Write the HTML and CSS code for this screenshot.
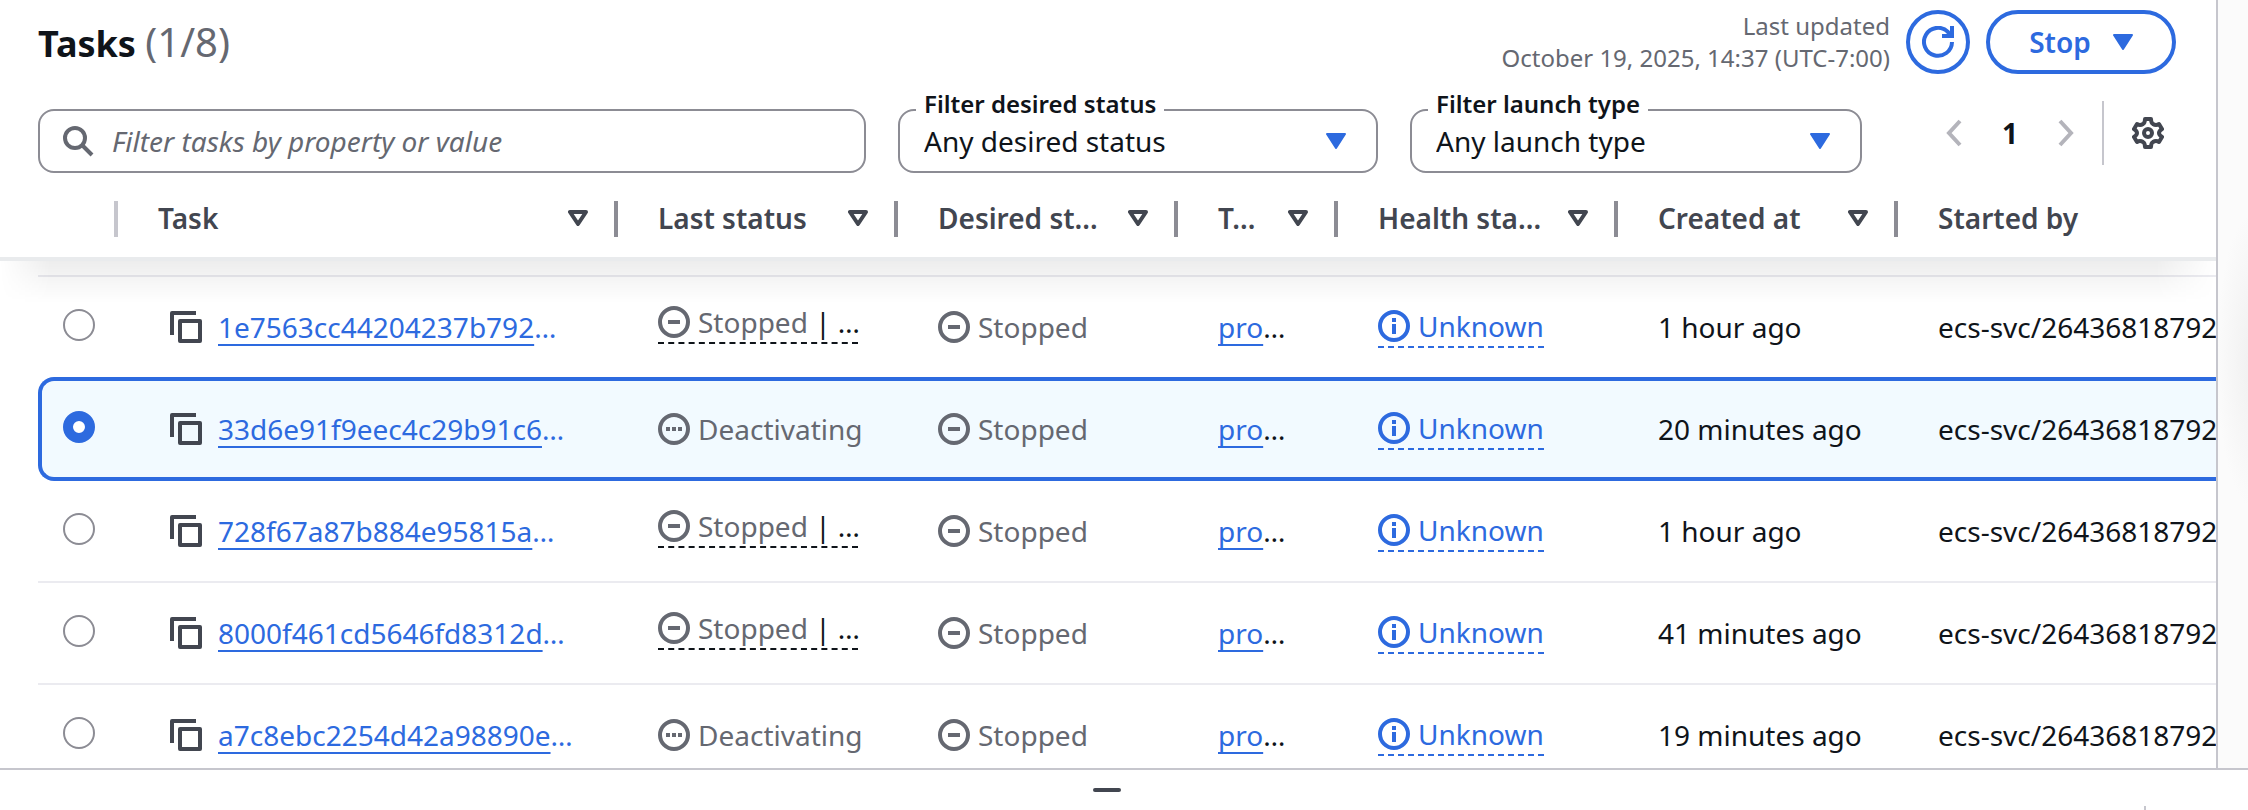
FILE: index.html
```html
<!DOCTYPE html>
<html lang="en">
<head>
<meta charset="utf-8">
<title>Tasks</title>
<link rel="stylesheet" href="styles.css">
</head>
<body>
<svg class="defs" aria-hidden="true">
  <symbol id="copy" viewBox="0 0 32 32"><path d="M2 24V2H26M10 10H30V30H10Z" fill="none" stroke="currentColor" stroke-width="4" stroke-linejoin="round"/></symbol>
  <symbol id="stopped" viewBox="0 0 32 32"><circle cx="16" cy="16" r="14" fill="none" stroke="currentColor" stroke-width="4"/><path d="M10 16H22" stroke="currentColor" stroke-width="4"/></symbol>
  <symbol id="pending" viewBox="0 0 32 32"><circle cx="16" cy="16" r="14" fill="none" stroke="currentColor" stroke-width="4"/><path d="M8 16H12M14 16H18M20 16H24" stroke="currentColor" stroke-width="4"/></symbol>
  <symbol id="info" viewBox="0 0 32 32"><circle cx="16" cy="16" r="14" fill="none" stroke="currentColor" stroke-width="4"/><path d="M16 8V12M16 14V24" stroke="currentColor" stroke-width="4"/></symbol>
  <symbol id="sort" viewBox="0 0 20 16"><path d="M2 2H18L10 14Z" fill="none" stroke="currentColor" stroke-width="4" stroke-linejoin="round"/></symbol>
  <symbol id="caret" viewBox="0 0 20 16"><path d="M1 1H19L10 15Z" fill="currentColor" stroke="currentColor" stroke-width="2" stroke-linejoin="round"/></symbol>
</svg>
<div class="layout">
  <main class="content">
    <header class="bar">
      <h2 class="title">Tasks <span class="count">(1/8)</span></h2>
      <div class="actions">
        <p class="updated">Last updated<br>October 19, 2025, 14:37 (UTC-7:00)</p>
        <button class="btn round" aria-label="Refresh"><svg width="32" height="32" viewBox="0 0 32 32" fill="none" stroke="currentColor" stroke-width="4"><path d="M30 16A14 14 0 1 1 26 6L29 10"/><path d="M30 0V10H20"/></svg></button>
        <button class="btn stop">Stop<svg width="20" height="16"><use href="#caret"/></svg></button>
      </div>
    </header>
    <div class="filters">
      <label class="search"><svg width="32" height="32" viewBox="0 0 32 32" fill="none" stroke="currentColor" stroke-width="4"><circle cx="13" cy="13" r="10"/><path d="M20 20L30 30"/></svg><input type="text" aria-label="Filter tasks" placeholder="Filter tasks by property or value"></label>
      <div class="field wide"><label for="desired">Filter desired status</label><select id="desired"><option>Any desired status</option></select><svg width="20" height="16"><use href="#caret"/></svg></div>
      <div class="field"><label for="launch">Filter launch type</label><select id="launch"><option>Any launch type</option></select><svg width="20" height="16"><use href="#caret"/></svg></div>
      <nav class="pager">
        <button class="icon off" aria-label="Previous page"><svg width="16" height="28" viewBox="0 0 16 28" fill="none" stroke="currentColor" stroke-width="4"><path d="M14 2L3 14L14 26"/></svg></button>
        <button class="page">1</button>
        <button class="icon off" aria-label="Next page"><svg width="16" height="28" viewBox="0 0 16 28" fill="none" stroke="currentColor" stroke-width="4"><path d="M2 2L13 14L2 26"/></svg></button>
        <button class="icon prefs" aria-label="Preferences"><svg width="32" height="32" viewBox="0 0 32 32" fill="none" stroke="currentColor" stroke-width="4" stroke-linejoin="round"><path d="M13 2H19Q19 6 21 7Q24 9 27 7L30 12Q27 14 27 16Q27 18 30 20L27 25Q24 23 21 25Q19 26 19 30H13Q13 26 11 25Q8 23 5 25L2 20Q5 18 5 16Q5 14 2 12L5 7Q8 9 11 7Q13 6 13 2Z"/><circle cx="16" cy="16" r="4"/></svg></button>
      </nav>
    </div>
    <div class="scroller">
    <table class="tasks">
      <colgroup><col class="c-sel"><col class="c-task"><col class="c-mid"><col class="c-mid"><col class="c-def"><col class="c-mid"><col class="c-mid"><col class="c-by"></colgroup>
      <thead><tr>
        <th class="first"></th>
        <th><div><span>Task</span><svg><use href="#sort"/></svg></div></th>
        <th><div><span>Last status</span><svg><use href="#sort"/></svg></div></th>
        <th><div><span>Desired st…</span><svg><use href="#sort"/></svg></div></th>
        <th><div><span>T…</span><svg><use href="#sort"/></svg></div></th>
        <th><div><span>Health sta…</span><svg><use href="#sort"/></svg></div></th>
        <th><div><span>Created at</span><svg><use href="#sort"/></svg></div></th>
        <th class="last"><div><span>Started by</span></div></th>
      </tr></thead>
      <tbody>
      <tr class="peek"><td colspan="8"></td></tr>
      <tr class="before">
        <td class="sel"><input type="radio" name="task" aria-label="Select task 1e7563cc"></td>
        <td><div class="cell task"><button class="icon" aria-label="Copy"><svg><use href="#copy"/></svg></button><span class="id"><a href="#">1e7563cc44204237b792</a>…</span></div></td>
        <td><div class="cell dashed raised"><svg class="muted"><use href="#stopped"/></svg><span><span class="muted">Stopped</span> | …</span></div></td>
        <td><div class="cell muted"><svg><use href="#stopped"/></svg>Stopped</div></td>
        <td><a href="#">pro</a>…</td>
        <td><div class="cell dashed info"><svg><use href="#info"/></svg>Unknown</div></td>
        <td>1 hour ago</td><td>ecs-svc/26436818792</td>
      </tr>
      <tr class="selected">
        <td class="sel"><input type="radio" name="task" checked aria-label="Select task 33d6e91f"></td>
        <td><div class="cell task"><button class="icon" aria-label="Copy"><svg><use href="#copy"/></svg></button><span class="id"><a href="#">33d6e91f9eec4c29b91c6</a>…</span></div></td>
        <td><div class="cell muted"><svg><use href="#pending"/></svg>Deactivating</div></td>
        <td><div class="cell muted"><svg><use href="#stopped"/></svg>Stopped</div></td>
        <td><a href="#">pro</a>…</td>
        <td><div class="cell dashed info"><svg><use href="#info"/></svg>Unknown</div></td>
        <td>20 minutes ago</td><td>ecs-svc/26436818792</td>
      </tr>
      <tr>
        <td class="sel"><input type="radio" name="task" aria-label="Select task 728f67a8"></td>
        <td><div class="cell task"><button class="icon" aria-label="Copy"><svg><use href="#copy"/></svg></button><span class="id"><a href="#">728f67a87b884e95815a</a>…</span></div></td>
        <td><div class="cell dashed raised"><svg class="muted"><use href="#stopped"/></svg><span><span class="muted">Stopped</span> | …</span></div></td>
        <td><div class="cell muted"><svg><use href="#stopped"/></svg>Stopped</div></td>
        <td><a href="#">pro</a>…</td>
        <td><div class="cell dashed info"><svg><use href="#info"/></svg>Unknown</div></td>
        <td>1 hour ago</td><td>ecs-svc/26436818792</td>
      </tr>
      <tr>
        <td class="sel"><input type="radio" name="task" aria-label="Select task 8000f461"></td>
        <td><div class="cell task"><button class="icon" aria-label="Copy"><svg><use href="#copy"/></svg></button><span class="id"><a href="#">8000f461cd5646fd8312d</a>…</span></div></td>
        <td><div class="cell dashed raised"><svg class="muted"><use href="#stopped"/></svg><span><span class="muted">Stopped</span> | …</span></div></td>
        <td><div class="cell muted"><svg><use href="#stopped"/></svg>Stopped</div></td>
        <td><a href="#">pro</a>…</td>
        <td><div class="cell dashed info"><svg><use href="#info"/></svg>Unknown</div></td>
        <td>41 minutes ago</td><td>ecs-svc/26436818792</td>
      </tr>
      <tr>
        <td class="sel"><input type="radio" name="task" aria-label="Select task a7c8ebc2"></td>
        <td><div class="cell task"><button class="icon" aria-label="Copy"><svg><use href="#copy"/></svg></button><span class="id"><a href="#">a7c8ebc2254d42a98890e</a>…</span></div></td>
        <td><div class="cell muted"><svg><use href="#pending"/></svg>Deactivating</div></td>
        <td><div class="cell muted"><svg><use href="#stopped"/></svg>Stopped</div></td>
        <td><a href="#">pro</a>…</td>
        <td><div class="cell dashed info"><svg><use href="#info"/></svg>Unknown</div></td>
        <td>19 minutes ago</td><td>ecs-svc/26436818792</td>
      </tr>
      </tbody>
    </table>
    </div>
  </main>
  <aside class="gutter"></aside>
</div>
<footer class="panel"><span class="handle"></span><span class="tick"></span></footer>
</body>
</html>
```
FILE: styles.css
```css
* { box-sizing: border-box; }
body {
  margin: 0;
  height: 100vh;
  overflow: hidden;
  display: flex;
  flex-direction: column;
  background: #fff;
  color: #0f141a;
  font: 28px/40px "Noto Sans", "Open Sans", sans-serif;
}
button, input, select { font: inherit; color: inherit; }
svg { display: block; flex: none; }
.defs { position: absolute; width: 0; height: 0; }

.layout { flex: 1; min-height: 0; display: flex; }
.content { flex: 1; min-width: 0; overflow: hidden; border-right: 2px solid #c6c6cd; display: flex; flex-direction: column; }
.gutter { width: 30px; background: radial-gradient(ellipse 40px 150px at 38px 360px, #efefef, #fbfbfb); }

.bar { display: flex; justify-content: space-between; padding: 10px 40px 0 38px; height: 74px; flex: none; }
.title { margin: 8px 0 0; font-size: 36px; line-height: 48px; font-weight: 700; }
.count { font-size: 40px; font-weight: 400; color: #656871; }
.actions { display: flex; gap: 16px; }
.updated { margin: 0; font-size: 24px; line-height: 32px; text-align: right; color: #656871; }
.btn { height: 64px; border: 4px solid #2d6adf; border-radius: 32px; background: #fff; color: #2d6adf; font-weight: 600; display: flex; align-items: center; justify-content: center; padding: 0; }
.round { width: 64px; }
.stop { width: 190px; gap: 22px; }

.filters { display: flex; align-items: center; gap: 32px; padding: 35px 52px 0 38px; flex: none; }
.search { flex: 1; height: 64px; display: flex; align-items: center; gap: 18px; padding: 0 22px; border: 2px solid #8c8c94; border-radius: 16px; color: #656871; }
.search input { flex: 1; min-width: 0; border: 0; padding: 0; outline: 0; background: none; }
.search input::placeholder { color: #656871; font-style: italic; opacity: 1; }
.field { position: relative; width: 452px; }
.field.wide { width: 480px; }
.field select { appearance: none; display: block; width: 100%; height: 64px; padding: 0 24px; border: 2px solid #8c8c94; border-radius: 16px; background: #fff; }
.field label { position: absolute; left: 18px; top: -21px; padding: 0 8px; background: #fff; font-size: 24px; line-height: 32px; font-weight: 600; }
.field svg { position: absolute; right: 32px; top: 24px; color: #2d6adf; }
.pager { display: flex; align-items: center; margin: -16px 0 0 52px; }
.icon { display: block; border: 0; padding: 0; background: none; color: #424650; }
.off { color: #b4b4bb; }
.page { border: 0; padding: 0; width: 96px; background: none; font-weight: 700; }
.prefs { height: 64px; margin-left: 28px; padding-left: 28px; border-left: 2px solid #c6c6cd; }

.scroller { flex: 1; min-height: 0; overflow: hidden; padding-left: 38px; }
.tasks { width: 100%; table-layout: fixed; border-collapse: separate; border-spacing: 0; }
.c-sel { width: 80px; }
.c-task { width: 500px; }
.c-mid { width: 280px; }
.c-def { width: 160px; }
th { position: relative; height: 88px; padding: 6px 30px 0 40px; border-bottom: 4px solid #e9ebed; text-align: left; color: #424650; font-weight: 600; }
th div { display: flex; align-items: center; justify-content: space-between; white-space: nowrap; }
th svg { width: 20px; height: 16px; }
th::after { content: ""; position: absolute; right: 0; top: 28px; width: 4px; height: 36px; background: #8c8c94; }
.first::after { background: #c6c6cd; }
.first::before { content: ""; position: absolute; left: -38px; top: 84px; width: 38px; height: 4px; background: #e9ebed; }
.last::after { display: none; }
.last { padding-right: 0; }
thead { position: relative; }
thead::after { content: ""; position: absolute; left: -38px; right: 0; top: 88px; height: 42px; background: linear-gradient(rgba(0, 0, 0, .07), rgba(0, 0, 0, 0)); mask: linear-gradient(90deg, transparent, #000 50px, #000 calc(100% - 60px), transparent); pointer-events: none; }

td { height: 102px; padding: 0 0 0 40px; border-bottom: 2px solid #ebebf0; white-space: nowrap; }
.peek td { height: 16px; padding: 0; }
.before td { height: 100px; border-bottom: 0; }
.sel { padding: 0 0 4px 25px; }
.sel input { appearance: none; display: block; width: 32px; height: 32px; margin: 0; border: 2px solid #8c8c94; border-radius: 50%; background: #fff; }
.sel input:checked { border: 10px solid #2d6adf; }
.selected td { height: 104px; background: #f2faff; border-top: 4px solid #2d6adf; border-bottom: 4px solid #2d6adf; }
.selected .sel { padding-left: 21px; border-left: 4px solid #2d6adf; border-radius: 16px 0 0 16px; }
a { color: #2d6adf; text-decoration: underline 2px; text-underline-offset: 6px; text-decoration-skip-ink: none; }
.cell { display: flex; align-items: center; gap: 8px; }
.cell svg { width: 32px; height: 32px; }
.task { gap: 16px; padding-left: 12px; }
.id, .info { color: #2d6adf; }
.muted { color: #656871; }
.dashed { width: max-content; border-bottom: 2px dashed currentColor; }
.raised { width: 200px; margin-bottom: 8px; }

.panel { position: relative; flex: none; height: 42px; border-top: 2px solid #c6c6cd; background: #fff; }
.handle { position: absolute; left: 50%; top: 18px; width: 28px; height: 4px; margin-left: -31px; border-radius: 2px; background: #424650; }
.tick { position: absolute; right: 102px; bottom: 0; width: 2px; height: 4px; background: #c6c6cd; }
```
